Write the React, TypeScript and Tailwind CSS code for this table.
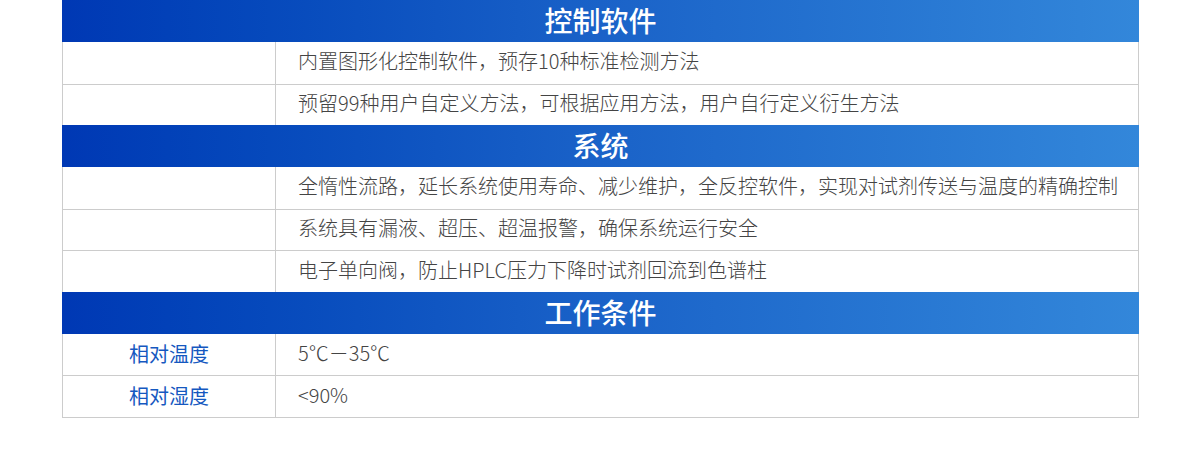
import React from 'react';

interface Section {
    title: string;
    rows: { label: string; value: string }[];
}

const sections: Section[] = [
    {
        title: '控制软件',
        rows: [
            { label: '', value: '内置图形化控制软件，预存10种标准检测方法' },
            { label: '', value: '预留99种用户自定义方法，可根据应用方法，用户自行定义衍生方法' },
        ],
    },
    {
        title: '系统',
        rows: [
            { label: '', value: '全惰性流路，延长系统使用寿命、减少维护，全反控软件，实现对试剂传送与温度的精确控制' },
            { label: '', value: '系统具有漏液、超压、超温报警，确保系统运行安全' },
            { label: '', value: '电子单向阀，防止HPLC压力下降时试剂回流到色谱柱' },
        ],
    },
    {
        title: '工作条件',
        rows: [
            { label: '相对温度', value: '5℃－35℃' },
            { label: '相对湿度', value: '<90%' },
        ],
    },
];

const App: React.FC = () => {
    return (
        <div
            className="w-[1200px] h-[469px] bg-white"
            style={{ fontFamily: '"Noto Sans CJK SC", "Noto Sans", sans-serif' }}
        >
            <div className="ml-[62px] w-[1077px] border-x border-b border-[#cccccc]">
                {sections.map((section) => (
                    <div key={section.title}>
                        <div className="h-[42px] -mx-px flex items-center justify-center pb-[2px] bg-gradient-to-r from-[#0038b4] via-[#1a62c8] to-[#3387da] text-white text-[28px] font-medium leading-none">
                            {section.title}
                        </div>
                        {section.rows.map((row, i) => (
                            <div
                                key={i}
                                className={`flex h-[41.5px] ${i > 0 ? 'border-t border-[#cccccc]' : ''}`}
                            >
                                <div className="w-[213px] shrink-0 border-r border-[#cccccc] flex items-center justify-center text-[20px] text-[#1558c0]">
                                    {row.label}
                                </div>
                                <div className="flex-1 flex items-center pl-[22px] pb-[3px] text-[20px] font-light text-[#444444]">
                                    {row.value}
                                </div>
                            </div>
                        ))}
                    </div>
                ))}
            </div>
        </div>
    );
};

export default App;
